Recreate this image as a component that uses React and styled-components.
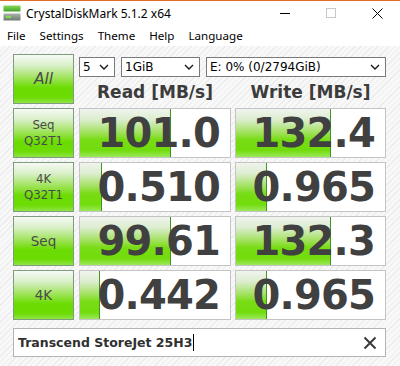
import React from 'react'
import styled, { createGlobalStyle } from 'styled-components'

const Global = createGlobalStyle`
  html, body { margin: 0; padding: 0; background: #fff; }
  body { width: 400px; height: 366px; overflow: hidden; }
`

const Window = styled.div`
  width: 400px;
  height: 366px;
  border-top: 1px solid #e06c2c;
  box-sizing: border-box;
  display: flex;
  flex-direction: column;
  background: #fff;
`

const TitleBar = styled.div`
  height: 24px;
  display: flex;
  align-items: center;
  font-family: "Noto Sans", "Open Sans", sans-serif;
  font-size: 12px;
  color: #000;
`

const AppIcon = styled.svg`
  margin: 0 5px 0 3px;
  flex: none;
`

const Title = styled.div`
  flex: 1;
  white-space: nowrap;
`

const Caption = styled.div`
  width: 46px;
  height: 24px;
  display: flex;
  align-items: center;
  justify-content: center;
`

const MenuBar = styled.div`
  height: 21px;
  display: flex;
  align-items: center;
  font-family: "Noto Sans", "Open Sans", sans-serif;
  font-size: 11.6px;
  color: #000;
`

const MenuItem = styled.div`
  padding: 0 7px;
`

const Body = styled.div`
  flex: 1;
  padding: 8px 14px 0 13px;
  background: repeating-linear-gradient(135deg, #f8f8f8 0 3px, #ececec 3px 4px);
`

const Grid = styled.div`
  display: grid;
  grid-template-columns: 62px 152px 151px;
  column-gap: 4px;
  row-gap: 4px;
  grid-auto-rows: 50px;
`

const TestButton = styled.div`
  width: 61px;
  box-sizing: border-box;
  border: 1px solid #7f9c7f;
  background: linear-gradient(to bottom, #f7faf5 0%, #d8efc8 22%, #9fe35a 48%, #6bdc02 68%, #6cdc04 88%, #8fe446 100%);
  display: flex;
  flex-direction: column;
  align-items: center;
  justify-content: center;
  font-family: "DejaVu Sans", Verdana, sans-serif;
  font-size: ${p => p.$size};
  font-style: ${p => (p.$italic ? 'italic' : 'normal')};
  line-height: 16px;
  color: #4a4a4a;
`

const TopRight = styled.div`
  grid-column: 2 / 4;
  display: flex;
  flex-direction: column;
`

const SelectRow = styled.div`
  display: flex;
  gap: 6px;
  margin-top: 3px;
  height: 20px;
`

const Select = styled.div`
  box-sizing: border-box;
  width: ${p => p.$w}px;
  height: 20px;
  border: 1px solid #7a7a7a;
  background: #fff;
  display: flex;
  align-items: center;
  justify-content: space-between;
  padding: 0 5px 0 3px;
  font-family: "DejaVu Sans", Verdana, sans-serif;
  font-size: 12px;
  color: #000;
  white-space: nowrap;
`

const HeaderRow = styled.div`
  display: grid;
  grid-template-columns: 152px 151px;
  column-gap: 4px;
  flex: 1;
  align-items: center;
  padding-top: 2px;
`

const Header = styled.div`
  text-align: center;
  font-family: "DejaVu Sans", Verdana, sans-serif;
  font-weight: bold;
  font-size: 17px;
  color: #3c3c3c;
  white-space: nowrap;
`

const Cell = styled.div`
  position: relative;
  box-sizing: border-box;
  border: 1px solid #c4c4c4;
  background: #fff;
  display: flex;
  align-items: center;
  justify-content: flex-end;
  padding-right: 10px;
  overflow: hidden;
`

const Bar = styled.div`
  position: absolute;
  left: 0;
  top: 0;
  bottom: 0;
  border-right: 1px solid #3f9422;
  background: linear-gradient(to bottom, #f0f4ee 0%, #dcedd0 22%, #a6e266 47%, #78dc14 64%, #72dc0c 86%, #9ce85c 100%);
`

const Value = styled.div`
  position: relative;
  font-family: "DejaVu Sans", Verdana, sans-serif;
  font-weight: bold;
  font-size: 40px;
  letter-spacing: -0.8px;
  color: #404040;
  line-height: 1;
`

const NameBox = styled.div`
  box-sizing: border-box;
  margin-top: 8px;
  height: 29px;
  border: 1px solid #b4b4b4;
  background: #fff;
  display: flex;
  align-items: center;
  padding: 0 8px 0 4px;
  font-family: "DejaVu Sans", Verdana, sans-serif;
  font-weight: bold;
  font-size: 12.5px;
  color: #303030;
`

const Caret = styled.span`
  display: inline-block;
  width: 1px;
  height: 17px;
  background: #000;
  margin-left: 1px;
`

const NameText = styled.div`
  flex: 1;
  display: flex;
  align-items: center;
`

const Chevron = () => (
  <svg width="10" height="6" viewBox="0 0 10 6">
    <path d="M1 1 L5 5 L9 1" fill="none" stroke="#1a1a1a" strokeWidth="1.4" />
  </svg>
)

const rows = [
  { label: ['Seq', 'Q32T1'], read: '101.0', write: '132.4' },
  { label: ['4K', 'Q32T1'], read: '0.510', write: '0.965' },
  { label: ['Seq'], read: '99.61', write: '132.3' },
  { label: ['4K'], read: '0.442', write: '0.965' },
]

// log scale: ~30px per decade, 1 MB/s at 30px
const barWidth = v => Math.max(0, 30 * (Math.log10(parseFloat(v)) + 1))

const Result = ({ value }) => (
  <Cell>
    <Bar style={{ width: barWidth(value) + 'px' }} />
    <Value>{value}</Value>
  </Cell>
)

const App = () => {
  return (
    <Window>
      <Global />
      <TitleBar>
        <AppIcon width="18" height="16" viewBox="0 0 18 16">
          <defs>
            <linearGradient id="gtop" x1="0" y1="0" x2="0" y2="1">
              <stop offset="0" stopColor="#8ad85a" />
              <stop offset="1" stopColor="#3fa42a" />
            </linearGradient>
            <linearGradient id="gbot" x1="0" y1="0" x2="0" y2="1">
              <stop offset="0" stopColor="#a9b3a9" />
              <stop offset="1" stopColor="#6f7a70" />
            </linearGradient>
          </defs>
          <rect x="0.5" y="0.5" width="17" height="6" fill="url(#gtop)" />
          <rect x="0.5" y="8.5" width="17" height="7" fill="url(#gbot)" />
          <rect x="3" y="11" width="5" height="2" fill="#7fe04a" />
        </AppIcon>
        <Title>CrystalDiskMark 5.1.2 x64</Title>
        <Caption>
          <svg width="10" height="10" viewBox="0 0 10 10"><path d="M0 5.5 H10" stroke="#000" strokeWidth="1" /></svg>
        </Caption>
        <Caption>
          <svg width="10" height="10" viewBox="0 0 10 10"><rect x="0.5" y="0.5" width="9" height="9" fill="none" stroke="#c8c8c8" /></svg>
        </Caption>
        <Caption>
          <svg width="11" height="11" viewBox="0 0 11 11"><path d="M0.5 0.5 L10.5 10.5 M10.5 0.5 L0.5 10.5" stroke="#000" strokeWidth="1" /></svg>
        </Caption>
      </TitleBar>
      <MenuBar>
        {['File', 'Settings', 'Theme', 'Help', 'Language'].map(m => (
          <MenuItem key={m}>{m}</MenuItem>
        ))}
      </MenuBar>
      <Body>
        <Grid>
          <TestButton $size="15.5px" $italic>All</TestButton>
          <TopRight>
            <SelectRow>
              <Select $w={36}>5<Chevron /></Select>
              <Select $w={79}>1GiB<Chevron /></Select>
              <Select $w={180}>E: 0% (0/2794GiB)<Chevron /></Select>
            </SelectRow>
            <HeaderRow>
              <Header>Read [MB/s]</Header>
              <Header>Write [MB/s]</Header>
            </HeaderRow>
          </TopRight>
          {rows.map((r, i) => (
            <React.Fragment key={i}>
              <TestButton $size={r.label.length > 1 ? '11.8px' : '13.5px'}>
                {r.label.map(l => <div key={l}>{l}</div>)}
              </TestButton>
              <Result value={r.read} />
              <Result value={r.write} />
            </React.Fragment>
          ))}
        </Grid>
        <NameBox>
          <NameText>Transcend StoreJet 25H3<Caret /></NameText>
          <svg width="14" height="14" viewBox="0 0 14 14">
            <path d="M1.5 1.5 L12.5 12.5 M12.5 1.5 L1.5 12.5" stroke="#3a3a3a" strokeWidth="2" />
          </svg>
        </NameBox>
      </Body>
    </Window>
  )
}

export default App
